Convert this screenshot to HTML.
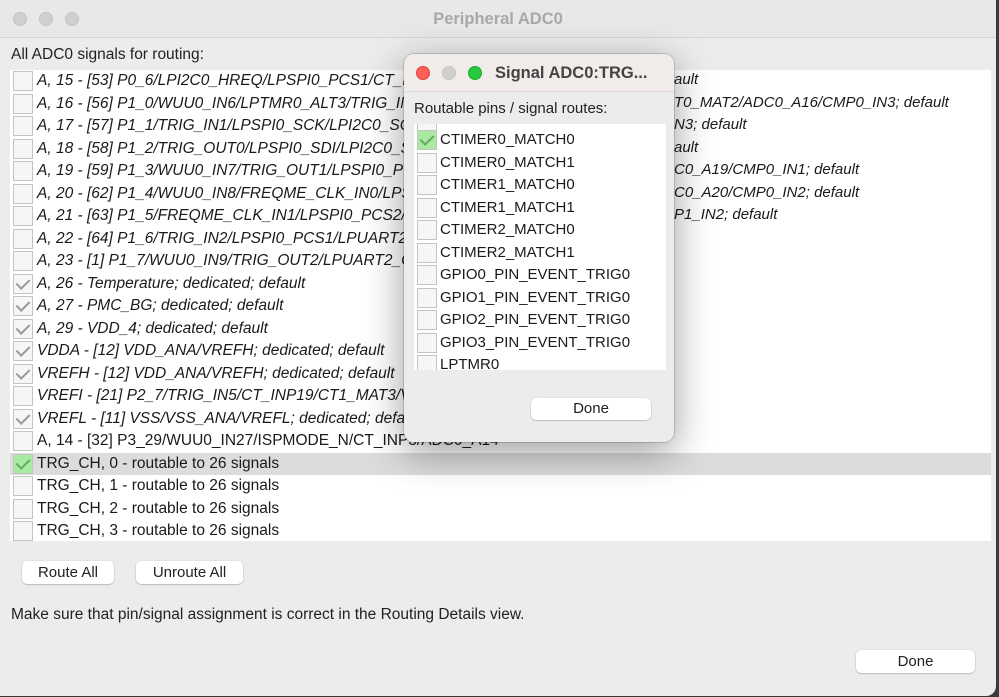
<!DOCTYPE html>
<html><head><meta charset="utf-8"><style>
*{box-sizing:border-box;margin:0;padding:0}
body{width:999px;height:697px;background:#3a3a3a;font-family:"Liberation Sans",sans-serif;overflow:hidden;position:relative}
.win{position:absolute;left:0;top:0;width:996px;height:696px;background:#ececec;border-radius:0 0 10px 0;overflow:hidden}
.title{position:absolute;left:0;top:0;width:100%;height:38px;background:#e8e8e8;border-bottom:1px solid #d6d6d6;text-align:center;font-weight:bold;font-size:16.5px;color:#a8a8a8;line-height:38px}
.tl{position:absolute;top:12px;width:14px;height:14px;border-radius:50%;background:#d0d0d0;border:1px solid #c4c4c4}
.lbl{position:absolute;font-size:15.5px;color:#222}
.list{position:absolute;left:10px;top:70px;width:981px;height:471px;background:#fff;overflow:hidden}
.row{position:absolute;left:0;width:100%;height:22.5px;font-size:15.5px;line-height:22px;color:#1a1a1a;white-space:nowrap}
.row i{font-style:italic}
.cb{position:absolute;left:3px;top:1px;width:20px;height:20px;border:1.5px solid #c4c4c4;background:#f6f6f6}
.cb.g::after,.cb.gr::after{content:"";position:absolute;left:5px;top:1px;width:6px;height:11px;border-right:2px solid #999;border-bottom:2px solid #999;transform:rotate(45deg)}
.cb.gr{background:#a8eaa0}
.cb.gr::after{border-color:#6aa664}
.row .t{position:absolute;left:27px}
.sel{background:#dcdcdc}
.btn{position:absolute;height:23px;background:#fff;border-radius:5px;box-shadow:0 0.5px 1.5px rgba(0,0,0,.35);font-size:15px;text-align:center;line-height:23px;color:#222}
.dlg{position:absolute;left:404px;top:54px;width:270px;height:388px;background:#ececec;border-radius:10px;box-shadow:0 10px 40px rgba(0,0,0,.4),0 0 0 1px rgba(0,0,0,.15);overflow:hidden}
.dt{height:38px;background:#f1ecea;border-bottom:1px solid #d9d9d9;font-weight:bold;font-size:16.5px;color:#444;line-height:38px;padding-left:91px}
.dlist{position:absolute;left:10px;top:70px;width:252px;height:246px;background:#fff;overflow:hidden}
.dlist .row{font-size:15px}
.rt{position:absolute;font-style:italic;font-size:15px;color:#1a1a1a;white-space:nowrap}
</style></head><body>
<div class="win">
<div class="title">Peripheral ADC0</div>
<div class="tl" style="left:13px"></div><div class="tl" style="left:39px"></div><div class="tl" style="left:65px"></div>
<div class="lbl" style="left:11px;top:46px">All ADC0 signals for routing:</div>
<div class="list">
<div class="row" style="top:0px"><span class="cb"></span><span class="t"><i>A, 15 - [53] P0_6/LPI2C0_HREQ/LPSPI0_PCS1/CT_INP2/CT0_MAT0/ADC0_A15; default</i></span></div>
<div class="row" style="top:22.5px"><span class="cb"></span><span class="t"><i>A, 16 - [56] P1_0/WUU0_IN6/LPTMR0_ALT3/TRIG_IN0/LPSPI0_SDO/CT_INP4/CT0_MAT2</i></span></div>
<div class="row" style="top:45px"><span class="cb"></span><span class="t"><i>A, 17 - [57] P1_1/TRIG_IN1/LPSPI0_SCK/LPI2C0_SCL/CT_INP5/ADC0_A17/CMP0_IN3</i></span></div>
<div class="row" style="top:67.5px"><span class="cb"></span><span class="t"><i>A, 18 - [58] P1_2/TRIG_OUT0/LPSPI0_SDI/LPI2C0_SDA/CT_INP6; default</i></span></div>
<div class="row" style="top:90px"><span class="cb"></span><span class="t"><i>A, 19 - [59] P1_3/WUU0_IN7/TRIG_OUT1/LPSPI0_PCS0/CT_INP7/ADC0_A19</i></span></div>
<div class="row" style="top:112.5px"><span class="cb"></span><span class="t"><i>A, 20 - [62] P1_4/WUU0_IN8/FREQME_CLK_IN0/LPSPI0_PCS3/ADC0_A20</i></span></div>
<div class="row" style="top:135px"><span class="cb"></span><span class="t"><i>A, 21 - [63] P1_5/FREQME_CLK_IN1/LPSPI0_PCS2/LPUART2_TXD</i></span></div>
<div class="row" style="top:157.5px"><span class="cb"></span><span class="t"><i>A, 22 - [64] P1_6/TRIG_IN2/LPSPI0_PCS1/LPUART2_RTS</i></span></div>
<div class="row" style="top:180px"><span class="cb"></span><span class="t"><i>A, 23 - [1] P1_7/WUU0_IN9/TRIG_OUT2/LPUART2_CTS</i></span></div>
<div class="row" style="top:202.5px"><span class="cb g"></span><span class="t"><i>A, 26 - Temperature; dedicated; default</i></span></div>
<div class="row" style="top:225px"><span class="cb g"></span><span class="t"><i>A, 27 - PMC_BG; dedicated; default</i></span></div>
<div class="row" style="top:247.5px"><span class="cb g"></span><span class="t"><i>A, 29 - VDD_4; dedicated; default</i></span></div>
<div class="row" style="top:270px"><span class="cb g"></span><span class="t"><i>VDDA - [12] VDD_ANA/VREFH; dedicated; default</i></span></div>
<div class="row" style="top:292.5px"><span class="cb g"></span><span class="t"><i>VREFH - [12] VDD_ANA/VREFH; dedicated; default</i></span></div>
<div class="row" style="top:315px"><span class="cb"></span><span class="t"><i>VREFI - [21] P2_7/TRIG_IN5/CT_INP19/CT1_MAT3/VREFI</i></span></div>
<div class="row" style="top:337.5px"><span class="cb g"></span><span class="t"><i>VREFL - [11] VSS/VSS_ANA/VREFL; dedicated; default</i></span></div>
<div class="row" style="top:360px"><span class="cb"></span><span class="t">A, 14 - [32] P3_29/WUU0_IN27/ISPMODE_N/CT_INP3/ADC0_A14</span></div>
<div class="row sel" style="top:382.5px"><span class="cb gr"></span><span class="t">TRG_CH, 0 - routable to 26 signals</span></div>
<div class="row" style="top:405px"><span class="cb"></span><span class="t">TRG_CH, 1 - routable to 26 signals</span></div>
<div class="row" style="top:427.5px"><span class="cb"></span><span class="t">TRG_CH, 2 - routable to 26 signals</span></div>
<div class="row" style="top:450px"><span class="cb"></span><span class="t">TRG_CH, 3 - routable to 26 signals</span></div>
</div>
<div class="rt" style="left:674px;top:71px">ault</div>
<div class="rt" style="left:674px;top:93.5px">T0_MAT2/ADC0_A16/CMP0_IN3; default</div>
<div class="rt" style="left:674px;top:116px">N3; default</div>
<div class="rt" style="left:674px;top:138.5px">ault</div>
<div class="rt" style="left:674px;top:161px">C0_A19/CMP0_IN1; default</div>
<div class="rt" style="left:674px;top:183.5px">C0_A20/CMP0_IN2; default</div>
<div class="rt" style="left:674px;top:206px">P1_IN2; default</div>
<div class="btn" style="left:22px;top:561px;width:92px">Route All</div>
<div class="btn" style="left:136px;top:561px;width:107px">Unroute All</div>
<div class="lbl" style="left:11px;top:606px">Make sure that pin/signal assignment is correct in the Routing Details view.</div>
<div class="btn" style="left:856px;top:650px;width:119px">Done</div>
</div>
<div class="dlg">
<div class="dt">Signal ADC0:TRG...</div>
<div class="tl" style="left:12px;top:12px;background:#fe5f57;border-color:#e0443e"></div>
<div class="tl" style="left:38px;top:12px"></div>
<div class="tl" style="left:64px;top:12px;background:#28c840;border-color:#1aab29"></div>
<div class="lbl" style="left:10px;top:46px;font-size:15px">Routable pins / signal routes:</div>
<div class="dlist">
<div class="row" style="top:-8px"><span class="cb"></span></div>
<div class="row" style="top:5px"><span class="cb gr"></span><span class="t" style="left:26px">CTIMER0_MATCH0</span></div>
<div class="row" style="top:27.5px"><span class="cb"></span><span class="t" style="left:26px">CTIMER0_MATCH1</span></div>
<div class="row" style="top:50px"><span class="cb"></span><span class="t" style="left:26px">CTIMER1_MATCH0</span></div>
<div class="row" style="top:72.5px"><span class="cb"></span><span class="t" style="left:26px">CTIMER1_MATCH1</span></div>
<div class="row" style="top:95px"><span class="cb"></span><span class="t" style="left:26px">CTIMER2_MATCH0</span></div>
<div class="row" style="top:117.5px"><span class="cb"></span><span class="t" style="left:26px">CTIMER2_MATCH1</span></div>
<div class="row" style="top:140px"><span class="cb"></span><span class="t" style="left:26px">GPIO0_PIN_EVENT_TRIG0</span></div>
<div class="row" style="top:162.5px"><span class="cb"></span><span class="t" style="left:26px">GPIO1_PIN_EVENT_TRIG0</span></div>
<div class="row" style="top:185px"><span class="cb"></span><span class="t" style="left:26px">GPIO2_PIN_EVENT_TRIG0</span></div>
<div class="row" style="top:207.5px"><span class="cb"></span><span class="t" style="left:26px">GPIO3_PIN_EVENT_TRIG0</span></div>
<div class="row" style="top:230px"><span class="cb"></span><span class="t" style="left:26px">LPTMR0</span></div>
</div>
<div class="btn" style="left:127px;top:344px;width:120px;height:22px;line-height:22px">Done</div>
</div>
</body></html>
